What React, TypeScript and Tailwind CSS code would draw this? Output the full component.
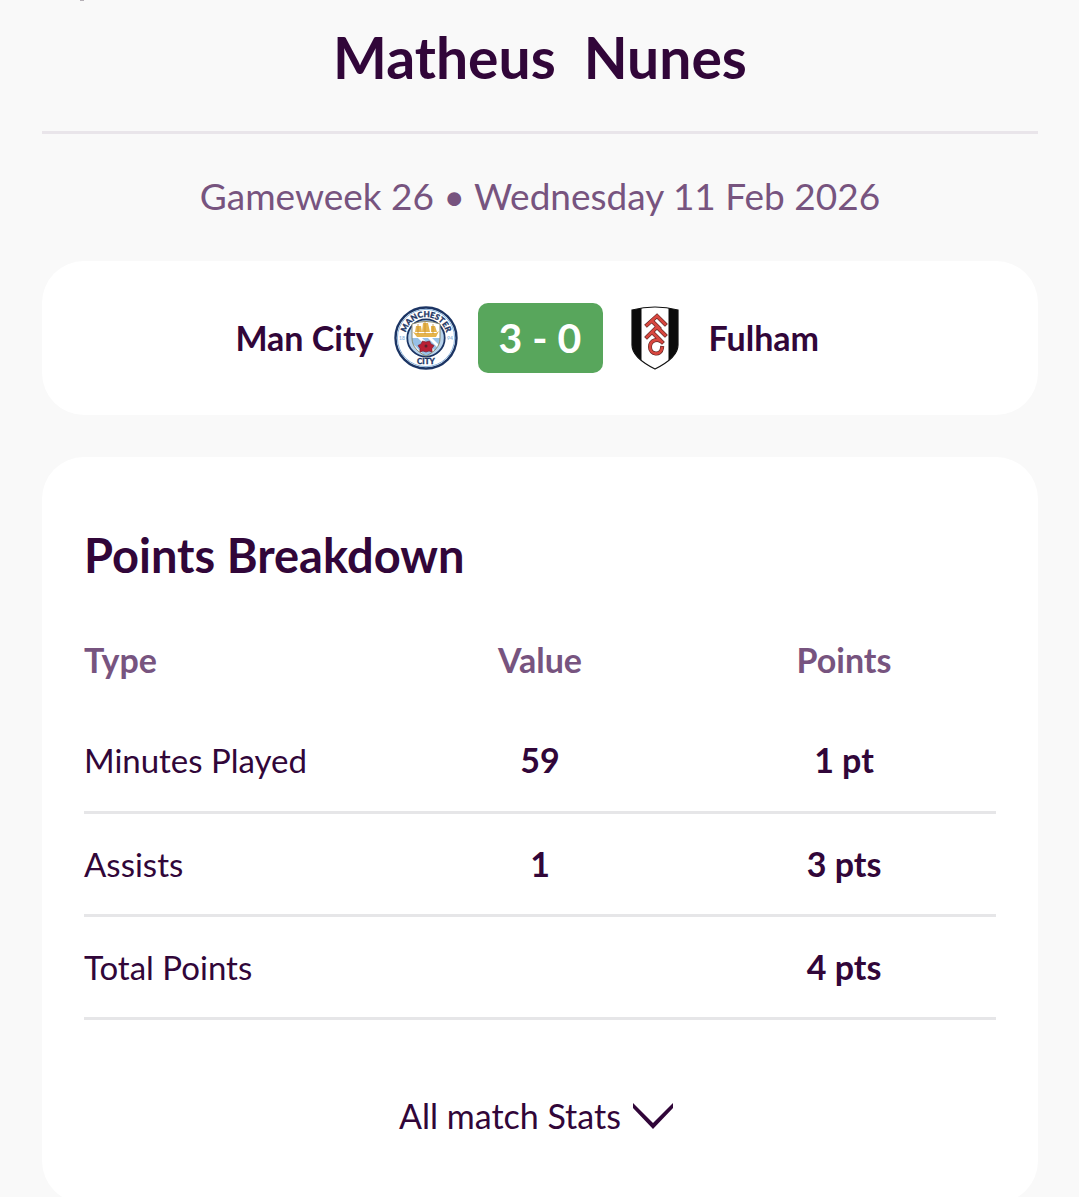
import React from "react";

const breakdown = [
  { type: "Minutes Played", value: "59", points: "1 pt" },
  { type: "Assists", value: "1", points: "3 pts" },
  { type: "Total Points", value: "", points: "4 pts" },
];

export default function App() {
  return (
    <div className="h-screen overflow-hidden bg-[#f9f9f9] pl-[42px] pr-[41px] font-['Lato',sans-serif] text-[#310639]">
      {/* Player header */}
      <header className="relative flex h-[134px] justify-center border-b-3 border-[#e9e5ea] pt-[22px]">
        <span className="absolute left-[38px] top-0 h-px w-1 bg-[#b5b0b6]" aria-hidden="true" />
        <h1 className="flex gap-7 text-[57px] font-bold leading-[70px]">
          <span>Matheus</span>
          <span>Nunes</span>
        </h1>
      </header>

      <p className="h-[127px] pt-[38px] text-center text-[37px] leading-[48px] text-[#77547f]">
        Gameweek 26 • Wednesday 11 Feb 2026
      </p>

      <MatchCard />

      {/* Points */}
      <section className="mt-[42px] rounded-[42px] bg-white px-[42px] pb-[66px] pt-[70px]">
        <h2 className="text-[47px] font-bold leading-[56px]">Points Breakdown</h2>
        <table className="mt-7 w-full table-fixed text-[34px] leading-[42px]">
          <thead>
            <tr className="h-[98px] text-[#77547f]">
              <th className="text-left font-bold">Type</th>
              <th className="font-bold">Value</th>
              <th className="font-bold">Points</th>
            </tr>
          </thead>
          <tbody>
            {breakdown.map(row => (
              <tr key={row.type} className="h-[103px] border-b-3 border-[#e6e6e8]">
                <td className="text-[33px]">{row.type}</td>
                <td className="text-center font-bold">{row.value}</td>
                <td className="text-center font-bold">{row.points}</td>
              </tr>
            ))}
          </tbody>
        </table>
        <button type="button" className="mx-auto mt-[75px] flex items-center gap-3 pr-2 text-[34px] leading-[42px]">
          All match Stats
          <svg className="h-[26px] w-10" viewBox="0 0 40 26" fill="#310639" aria-hidden="true">
            <path d="M0 0v5l20 21L40 5V0L20 20z" />
          </svg>
        </button>
      </section>
    </div>
  );
}

function MatchCard() {
  return (
    <section className="grid h-[154px] grid-cols-[1fr_auto_1fr] items-center rounded-[42px] bg-white text-[34px] font-bold leading-[42px]">
      <div className="flex items-center justify-end gap-5">
        Man City
        <ManCityBadge />
      </div>
      <div className="mx-5 flex h-[70px] w-[125px] items-center justify-center rounded-[10px] bg-[#58a65c] text-[41px] text-white">
        3 - 0
      </div>
      <div className="flex items-center gap-[30px] pl-2">
        <FulhamBadge />
        Fulham
      </div>
    </section>
  );
}

function ManCityBadge() {
  return (
    <svg className="size-16" viewBox="0 0 64 64" role="img" aria-label="Man City badge">
      <defs>
        <path id="city-top" d="M11 32a21 21 0 0 1 42 0" />
        <clipPath id="city-shield">
          <path d="M18 18q14-5 28 0v14c0 9-6 14-14 18-8-4-14-9-14-18z" />
        </clipPath>
      </defs>
      <circle cx="32" cy="32" r="30.500" fill="#fff" stroke="#1c3564" strokeWidth="2.400" />
      <circle cx="32" cy="32" r="28.600" fill="none" stroke="#8ab3dc" strokeWidth="1" />
      <circle cx="32" cy="32" r="18.700" fill="#b8d3ec" stroke="#1c3564" strokeWidth="1.800" />
      <g clipPath="url(#city-shield)">
        <path fill="#fff" d="M15 12h34v20H15z" />
        <path fill="#97c1e7" d="M15 32h34v20H15z" />
        <path d="m15 36 18 18m-9-24 20 20m-10-20 15 15" stroke="#fff" strokeWidth="3" />
      </g>
      <path d="M18 18q14-5 28 0v14c0 9-6 14-14 18-8-4-14-9-14-18z" fill="none" stroke="#8a8a70" strokeWidth="1" />
      <path fill="#e5b44c" d="M22 27h20l3-2-3 6H23l-4-5zM22 20h5l1 6h-7zM29 17h5l2 9h-8zM37 20h4l2 6h-6z" />
      <path d="M24 18v10m7-13v13m8-10v10" stroke="#c8912f" strokeWidth=".8" />
      <path fill="#b91f35" stroke="#742033" strokeWidth=".7" d="m32 46-3-1-3 1-0-3.500-2-3 3-1.500 1.500-3 3.500 1 3.500-1 1.500 3 3 1.500-2 3v3.500l-3-1z" />
      <circle cx="32" cy="40" r="1.500" fill="#57202d" />
      <text fill="#1c3564" fontSize="8" fontWeight="900" textAnchor="middle" stroke="#1c3564" strokeWidth=".3">
        <textPath href="#city-top" startOffset="50%">MANCHESTER</textPath>
      </text>
      <text x="32" y="58" fill="#1c3564" fontSize="8" fontWeight="900" textAnchor="middle" stroke="#1c3564" strokeWidth=".3">CITY</text>
      <text x="8" y="34" fill="#8ab3dc" fontSize="5" textAnchor="middle">18</text>
      <text x="56" y="34" fill="#8ab3dc" fontSize="5" textAnchor="middle">94</text>
    </svg>
  );
}

function FulhamBadge() {
  const letters = "M16 19 26 10l8 8M21 15l7 7M16 31l10-10 8 8M21 26l8 8M31 36c-4-4-12-2-12 5 0 8 11 9 12 1";
  return (
    <svg className="h-16 w-12" viewBox="0 0 48 64" role="img" aria-label="Fulham badge">
      <defs>
        <clipPath id="fulham-shield">
          <path d="M1 4q23-6 46 0v35c0 10-11 18-23 24C12 57 1 49 1 39z" />
        </clipPath>
      </defs>
      <g clipPath="url(#fulham-shield)">
        <path fill="#fff" d="M0 0h48v64H0z" />
        <path fill="#0b0b0b" d="M0 0h10.500v64H0zM37.500 0H48v64H37.500z" />
      </g>
      <path d="M1 4q23-6 46 0v35c0 10-11 18-23 24C12 57 1 49 1 39z" fill="none" stroke="#111" strokeWidth="1.200" />
      <g fill="none" strokeLinecap="square">
        <path d={letters} stroke="#5b2522" strokeWidth="4" />
        <path d={letters} stroke="#d8473f" strokeWidth="2.800" />
      </g>
    </svg>
  );
}
